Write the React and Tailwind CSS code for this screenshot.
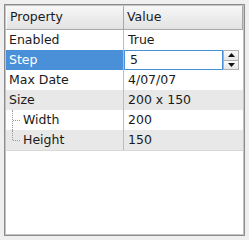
import React from "react";

const font = { fontFamily: '"DejaVu Sans", sans-serif' };

function Row({ name, value, alt, selected, child, last, children }) {
  const bg = selected ? "bg-[#4a90d9]" : alt ? "bg-[#e8e8e8]" : "bg-white";
  return (
    <div className={`flex h-[20px] ${alt ? "bg-[#e8e8e8]" : "bg-white"}`}>
      <div
        className={`relative w-[118px] shrink-0 border-r border-[#bdbdbd] flex items-center ${bg} ${
          selected ? "text-white" : "text-[#1a1a1a]"
        } ${child ? "pl-[17px]" : "pl-[3px]"}`}
      >
        {child && (
          <>
            <div
              className={`absolute left-[6px] top-0 w-0 border-l border-dotted border-[#9a9a9a] ${
                last ? "h-[10px]" : "h-[20px]"
              }`}
            />
            <div className="absolute left-[7px] top-[10px] w-[7px] h-0 border-t border-dotted border-[#9a9a9a]" />
          </>
        )}
        {name}
      </div>
      <div className="flex-1 flex items-center pl-[4px] text-[#1a1a1a]">
        {children ? children : value}
      </div>
    </div>
  );
}

function SpinBox() {
  return (
    <div className="flex h-[20px] w-full -ml-[4px]">
      <div className="flex-1 border border-[#4a90d9] bg-white flex items-center pl-[5px] text-[#1a1a1a]">
        5
      </div>
      <div className="w-[16px] flex flex-col bg-[#f0f0f0] border border-[#b0b0b0]">
        <div className="flex-1 flex items-center justify-center border-b border-[#b0b0b0] bg-gradient-to-b from-[#fafafa] to-[#e6e6e6]">
          <svg width="7" height="4" viewBox="0 0 7 4">
            <path d="M0 4 L3.5 0 L7 4 Z" fill="#111" />
          </svg>
        </div>
        <div className="flex-1 flex items-center justify-center bg-gradient-to-b from-[#fafafa] to-[#e6e6e6]">
          <svg width="7" height="4" viewBox="0 0 7 4">
            <path d="M0 0 L7 0 L3.5 4 Z" fill="#111" />
          </svg>
        </div>
      </div>
    </div>
  );
}

export default function App() {
  return (
    <div className="w-[249px] h-[240px] bg-[#efefef] p-[4px] text-[12.5px]" style={font}>
      <div className="w-[241px] h-[232px] border border-[#8c8c8c] shadow-[inset_0_0_0_1px_#c4c4c4] bg-white p-[1px] flex flex-col">
        <div className="flex h-[24px] bg-gradient-to-b from-[#f7f7f7] to-[#e2e2e2] border-b border-[#a8a8a8]">
          <div className="w-[118px] shrink-0 border-r border-[#a8a8a8] border-l border-l-[#fdfdfd] flex items-center pl-[3px] text-[#1a1a1a]">
            Property
          </div>
          <div className="flex-1 flex items-center pl-[3px] text-[#1a1a1a] border-r border-[#a8a8a8]">
            Value
          </div>
        </div>
        <Row name="Enabled" value="True" />
        <Row name="Step" selected>
          <SpinBox />
        </Row>
        <Row name="Max Date" value="4/07/07" />
        <Row name="Size" value="200 x 150" alt />
        <Row name="Width" value="200" child />
        <Row name="Height" value="150" alt child last />
        <div className="h-[1px] bg-[#d8d8d8]" />
      </div>
    </div>
  );
}
